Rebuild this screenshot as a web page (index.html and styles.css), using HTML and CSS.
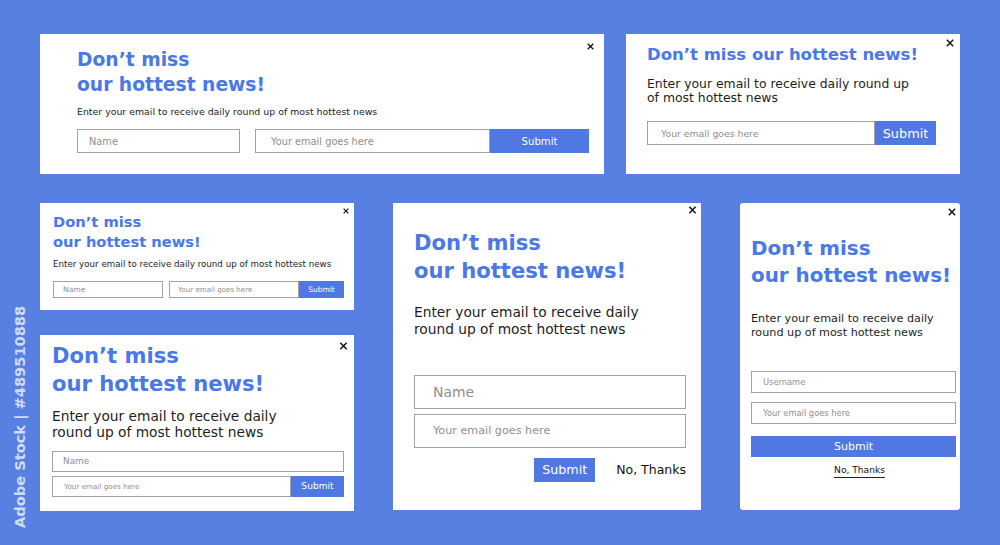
FILE: index.html
```html
<!DOCTYPE html>
<html>

<head>
    <title>Newsletter Popups</title>
    <link rel="stylesheet" href="styles.css">
</head>

<body>

    <div class="page">

        <!-- Top row: wide banner + compact one-line popup -->
        <div class="row row-top">
            <div class="popup banner">
                <button class="close"><svg viewBox="0 0 10 10"><path d="M1 1L9 9M9 1L1 9"/></svg></button>
                <h2>Don’t miss<br>our hottest news!</h2>
                <p>Enter your email to receive daily round up of most hottest news</p>
                <form class="fields">
                    <input class="name" placeholder="Name">
                    <div class="joined">
                        <input placeholder="Your email goes here">
                        <button type="button">Submit</button>
                    </div>
                </form>
            </div>

            <div class="popup compact">
                <button class="close"><svg viewBox="0 0 10 10"><path d="M1 1L9 9M9 1L1 9"/></svg></button>
                <h2>Don’t miss our hottest news!</h2>
                <p>Enter your email to receive daily round up<br>of most hottest news</p>
                <form class="fields">
                    <div class="joined">
                        <input placeholder="Your email goes here">
                        <button type="button">Submit</button>
                    </div>
                </form>
            </div>
        </div>

        <!-- Bottom row -->
        <div class="row row-bottom">
            <div class="stack">
                <div class="popup mini">
                    <button class="close"><svg viewBox="0 0 10 10"><path d="M1 1L9 9M9 1L1 9"/></svg></button>
                    <h2>Don’t miss<br>our hottest news!</h2>
                    <p>Enter your email to receive daily round up of most hottest news</p>
                    <form class="fields">
                        <input class="name" placeholder="Name">
                        <div class="joined">
                            <input placeholder="Your email goes here">
                            <button type="button">Submit</button>
                        </div>
                    </form>
                </div>

                <div class="popup box">
                    <button class="close"><svg viewBox="0 0 10 10"><path d="M1 1L9 9M9 1L1 9"/></svg></button>
                    <h2>Don’t miss<br>our hottest news!</h2>
                    <p>Enter your email to receive daily<br>round up of most hottest news</p>
                    <form class="fields">
                        <input class="name" placeholder="Name">
                        <div class="joined">
                            <input placeholder="Your email goes here">
                            <button type="button">Submit</button>
                        </div>
                    </form>
                </div>
            </div>

            <div class="popup square">
                <button class="close"><svg viewBox="0 0 10 10"><path d="M1 1L9 9M9 1L1 9"/></svg></button>
                <h2>Don’t miss<br>our hottest news!</h2>
                <p>Enter your email to receive daily<br>round up of most hottest news</p>
                <form class="fields">
                    <input class="name" placeholder="Name">
                    <input class="email" placeholder="Your email goes here">
                    <div class="actions">
                        <button type="button" class="submit">Submit</button>
                        <button type="button" class="no-thanks">No, Thanks</button>
                    </div>
                </form>
            </div>

            <div class="popup tall">
                <button class="close"><svg viewBox="0 0 10 10"><path d="M1 1L9 9M9 1L1 9"/></svg></button>
                <h2>Don’t miss<br>our hottest news!</h2>
                <p>Enter your email to receive daily<br>round up of most hottest news</p>
                <form class="fields">
                    <input placeholder="Username">
                    <input placeholder="Your email goes here">
                    <button type="button" class="submit">Submit</button>
                    <div class="skip"><button type="button" class="no-thanks">No, Thanks</button></div>
                </form>
            </div>
        </div>
    </div>

    <div class="stamp">Adobe Stock | #489510888</div>

</body>

</html>
```

FILE: styles.css
```css
body {
    margin: 0;
    width: 1000px;
    height: 545px;
    overflow: hidden;
    position: relative;
    background-color: #587fe2;
    font-family: 'DejaVu Sans', sans-serif;
}

.page {
    display: flex;
    flex-direction: column;
    gap: 29px;
    padding: 34px 40px 0;
}

.row {
    display: flex;
}

.row-top {
    gap: 22px;
}

.row-bottom {
    gap: 39px;
}

.stack {
    display: flex;
    flex-direction: column;
    gap: 25px;
}

/* Shared popup pieces */
.popup {
    position: relative;
    box-sizing: border-box;
    background-color: #fff;
}

.popup h2 {
    margin: 0;
    color: #4a78e6;
    font-weight: bold;
}

.popup p {
    margin: 0;
    color: #1d1d1d;
}

.close {
    position: absolute;
    padding: 0;
    border: none;
    background: none;
    display: block;
}

.close svg {
    display: block;
    width: 100%;
    height: 100%;
    stroke: #111;
    stroke-width: 1.8;
    fill: none;
}

.popup input {
    box-sizing: border-box;
    margin: 0;
    border: 1px solid #a2a2a2;
    background: #fff;
    font-family: inherit;
    outline: none;
    min-width: 0;
}

.popup input::placeholder {
    color: #8e8e8e;
}

.popup button {
    font-family: inherit;
    cursor: pointer;
}

.fields {
    display: flex;
}

.joined {
    display: flex;
    flex: 1;
}

.joined input {
    flex: 1;
    width: 0;
}

.joined button,
.submit {
    border: none;
    padding: 0;
    background-color: #5078e2;
    color: #fff;
}

/* Wide banner */
.banner {
    width: 564px;
    height: 140px;
    padding: 13px 15px 0 37px;
}

.banner .close {
    top: 9px;
    right: 10px;
    width: 7px;
    height: 7px;
}

.banner h2 {
    font-size: 18.7px;
    line-height: 25px;
}

.banner p {
    margin-top: 9px;
    font-size: 9.4px;
    line-height: 12px;
}

.banner .fields {
    margin-top: 11px;
    height: 24px;
    gap: 15px;
}

.banner .name {
    width: 163px;
    padding-left: 11px;
    font-size: 9.8px;
}

.banner .joined input {
    padding-left: 15px;
    font-size: 9.8px;
}

.banner .joined button {
    width: 99px;
    font-size: 10.1px;
}

/* Compact single line heading */
.compact {
    width: 334px;
    height: 140px;
    padding: 11px 24px 0 21px;
}

.compact .close {
    top: 5px;
    right: 6px;
    width: 8px;
    height: 8px;
}

.compact h2 {
    font-size: 16.5px;
    line-height: 20px;
}

.compact p {
    margin-top: 12px;
    font-size: 12.4px;
    line-height: 14px;
}

.compact .fields {
    margin-top: 16px;
    height: 24px;
}

.compact .joined input {
    padding-left: 13px;
    font-size: 9.3px;
}

.compact .joined button {
    width: 61px;
    font-size: 12.9px;
}

/* Small banner */
.mini {
    width: 314px;
    height: 107px;
    padding: 9px 10px 0 13px;
}

.mini .close {
    top: 5px;
    right: 5px;
    width: 6px;
    height: 6px;
}

.mini h2 {
    font-size: 14.7px;
    line-height: 20px;
}

.mini p {
    margin-top: 6.6px;
    font-size: 8.7px;
    line-height: 11px;
}

.mini .fields {
    margin-top: 11.5px;
    height: 17px;
    gap: 6px;
}

.mini .name {
    width: 110px;
    padding-left: 9px;
    font-size: 7.6px;
}

.mini .joined input {
    padding-left: 8px;
    font-size: 7.1px;
}

.mini .joined button {
    width: 45px;
    font-size: 7.5px;
}

/* Box with stacked fields */
.box {
    width: 314px;
    height: 176px;
    padding: 6.7px 10px 0 12px;
}

.box .close {
    top: 7px;
    right: 6px;
    width: 9px;
    height: 8px;
}

.box h2 {
    font-size: 21.1px;
    line-height: 28px;
}

.box p {
    margin-top: 10.5px;
    font-size: 13.75px;
    line-height: 16px;
}

.box .fields {
    margin-top: 10.8px;
    flex-direction: column;
    gap: 4px;
}

.box .name {
    height: 21px;
    padding-left: 10px;
    font-size: 8.9px;
}

.box .joined {
    flex: none;
    height: 21px;
}

.box .joined input {
    padding-left: 11px;
    font-size: 7.2px;
}

.box .joined button {
    width: 53px;
    font-size: 9.1px;
}

/* Square popup with "No, Thanks" */
.square {
    width: 308px;
    height: 307px;
    padding: 25.7px 15px 0 21px;
}

.square .close {
    top: 3px;
    right: 4px;
    width: 9px;
    height: 8px;
}

.square h2 {
    font-size: 21.1px;
    line-height: 28px;
}

.square p {
    margin-top: 19px;
    font-size: 13.75px;
    line-height: 17px;
}

.square .fields {
    margin-top: 37.3px;
    flex-direction: column;
    gap: 5px;
}

.square input {
    height: 34px;
    padding-left: 18px;
}

.square .name {
    font-size: 13.9px;
}

.square .email {
    font-size: 11.2px;
}

.square .actions {
    display: flex;
    justify-content: flex-end;
    align-items: center;
    gap: 21px;
    margin-top: 5px;
}

.square .submit {
    width: 61px;
    height: 24px;
    font-size: 12.7px;
}

.no-thanks {
    padding: 0;
    border: none;
    background: none;
    color: #111;
}

.square .no-thanks {
    font-size: 12.5px;
    line-height: 24px;
}

/* Tall narrow popup */
.tall {
    width: 220px;
    height: 307px;
    padding: 31.6px 4px 0 11px;
    border-radius: 3px;
}

.tall .close {
    top: 5px;
    right: 3px;
    width: 10px;
    height: 8px;
}

.tall h2 {
    font-size: 19.9px;
    line-height: 27px;
}

.tall p {
    margin-top: 23.5px;
    font-size: 11.2px;
    line-height: 14px;
}

.tall .fields {
    margin-top: 30.9px;
    flex-direction: column;
    gap: 9px;
}

.tall input {
    height: 22px;
    padding-left: 11px;
    font-size: 8.3px;
}

.tall .submit {
    height: 21px;
    margin-top: 3px;
    font-size: 11px;
}

.tall .skip {
    display: flex;
    justify-content: center;
    padding-left: 12px;
    margin-top: -2.2px;
}

.tall .no-thanks {
    font-size: 9.1px;
    line-height: 12px;
    padding-bottom: 1px;
    border-bottom: 1px solid #222;
}

/* Vertical stock id along the left edge */
.stamp {
    position: absolute;
    left: 13px;
    top: 528px;
    transform: rotate(-90deg);
    transform-origin: left top;
    white-space: nowrap;
    font-size: 14.6px;
    line-height: 1;
    font-weight: bold;
    color: rgba(255, 255, 255, 0.72);
}
```
